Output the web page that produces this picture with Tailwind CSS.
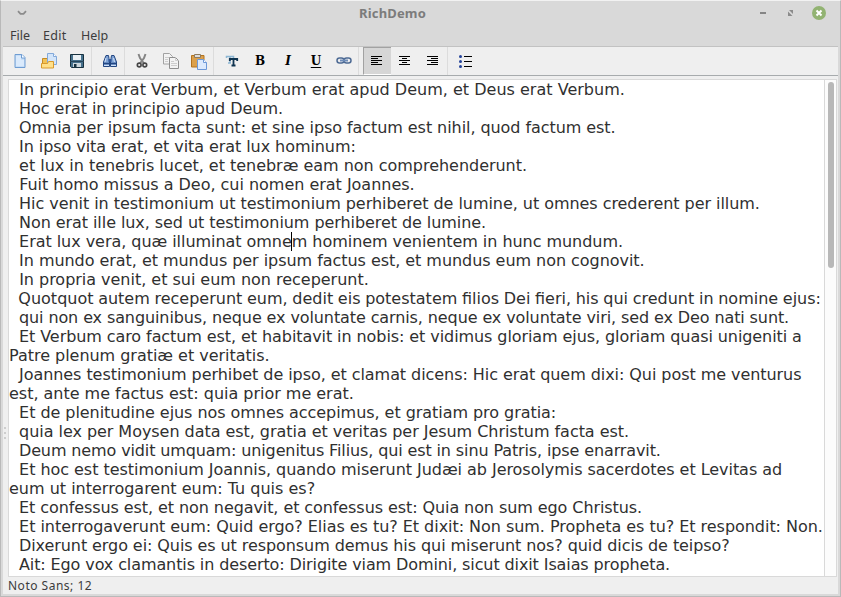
<!DOCTYPE html>
<html lang="la">
<head>
<meta charset="utf-8">
<title>RichDemo</title>
<script src="https://cdn.jsdelivr.net/npm/@tailwindcss/browser@4"></script>
</head>
<body class="w-[841px] h-[597px] overflow-hidden bg-[#d9d9d9]">
<div class="w-[841px] h-[597px] flex flex-col bg-[#d9d9d9] border-l-[1px] border-r-[1px] border-b-[1px] border-[#b9b9b9] border-t border-t-[#f2f2f2] px-[2px] pb-[2px] font-['Noto_Sans',sans-serif] text-[12px] text-[#3c3c3c]">
  <header class="h-[24px] shrink-0 grid grid-cols-[1fr_auto_1fr] items-center">
    <svg class="ml-[14px]" width="10" height="6" viewBox="0 0 10 6"><path d="M1 1.200 L3.500 3.800H6.500L9 1.200" fill="none" stroke="#8b8b8b" stroke-width="1.800"/></svg>
    <h1 class="font-bold text-[13px] tracking-[0.15px] leading-[24px] text-[#7c7c7c] mr-[56px]">RichDemo</h1>
    <div class="flex items-center justify-end pr-[12px]">
      <svg width="80" height="22" viewBox="0 0 80 22"><rect x="14" y="10" width="6" height="2" fill="#858585"/><path d="M43 8h4v4zM42 9.500v4.500h4.500z" fill="#8b8b8b"/><circle cx="73" cy="11" r="7" fill="#92b372"/><path d="M70.500 8.500l5 5m0-5l-5 5" stroke="#fff" stroke-width="2"/></svg>
    </div>
  </header>
  <nav class="h-[21px] shrink-0 flex items-center pl-[7px] leading-[21px] text-[12.5px]"><span class="w-[33px]">File</span><span class="w-[38px] tracking-[0.3px]">Edit</span><span>Help</span></nav>
  <div class="h-[30px] shrink-0 flex bg-[#efefef] border-t border-[#c2c2c2] border-b border-b-[#a7abad] [&>span]:w-7 [&>span]:flex [&>span]:items-center [&>span]:justify-center [&>i]:w-px [&>i]:bg-[#dcdcdc] pl-[3px]">
    <span><svg width="16" height="16" viewBox="0 0 16 16"><path d="M3 1.500h7l3 3v10H3z" fill="#c7def7" stroke="#6e9cd2"/><path d="M4 3h5v4h3v6H4z" fill="#e2effd" opacity=".7"/><path d="M9.500 1.500v3.500h3.500" fill="#fff" stroke="#6e9cd2"/></svg></span>
    <span class="pl-[2px]"><svg width="18" height="18" viewBox="0 0 18 18"><path d="M2.500 15V6.500h5l1 2h5V15" fill="#f2c255" stroke="#c58b25"/><path d="M7.500 1.500h6l3 3v8h-9z" fill="#d3e5fa" stroke="#82a9da"/><path d="M13.500 1.500v3h3" fill="#fff" stroke="#82a9da"/><path d="M1.500 11.500h6l1-2h5v6.500h-12z" fill="#ffe08a" stroke="#d99a2c"/></svg></span>
    <span class="pl-[2px]"><svg width="16" height="16" viewBox="0 0 16 16"><path d="M1.500 1.500h13v13h-12l-1-1z" fill="#47718d" stroke="#17313f"/><path d="M4 2h8v5H4z" fill="#e9f0f4"/><path d="M4 10h8v4H4z" fill="#cbd6dc"/><path d="M5 11h2.500v3H5z" fill="#17313f"/><path d="M1 8.500h14" stroke="#28465a"/></svg></span>
    <i class="mx-[1px]"></i>
    <span><svg class="ml-[5px]" width="16" height="16" viewBox="0 0 16 16"><path d="M4 2.500h2.500l.5 3 .5 3v5h-6V9zM9.500 2.500H12L14.500 9v4.500h-6v-5l.5-3z" fill="#7fa3d6" stroke="#234681"/><path d="M6.500 6h3v3h-3z" fill="#2f5597"/><path d="M4 5L3 9M11.500 5l1 4" stroke="#cfe0f7"/><path d="M2 12.500h5M9 12.500h5" stroke="#cfe0f7"/><path d="M1 10.500h6.500M8.500 10.500H15" stroke="#234681" stroke-width="1.500"/></svg></span>
    <i class="ml-[3px]"></i>
    <span class="ml-[3px]"><svg width="16" height="16" viewBox="0 0 16 16"><path d="M4.500 1L6 5l4 5.500M11.500 1L10 5l-4 5.500" stroke="#858585" stroke-width="2" fill="none"/><circle cx="5.200" cy="12" r="1.900" fill="none" stroke="#464646" stroke-width="1.600"/><circle cx="10.800" cy="12" r="1.900" fill="none" stroke="#464646" stroke-width="1.600"/></svg></span>
    <span class="ml-px"><svg width="16" height="16" viewBox="0 0 16 16"><path d="M.5.500h6l3 3v7.500h-9z" fill="#f3f3f3" stroke="#a2a2a2"/><path d="M6.500 4.500h6l3 3v8h-9z" fill="#f3f3f3" stroke="#8f8f8f"/><path d="M12.500 4.500v3h3M8 8.500h3M8 10.500h6M8 12.500h6M2 4.500h4M2 6.500h3M2 8.500h3" fill="none" stroke="#cdcdcd"/></svg></span>
    <span><svg class="-ml-px" width="17" height="17" viewBox="0 0 17 17"><path d="M1.500 2.500h12.500v11.500H1.500z" fill="#dba04c" stroke="#b3731f"/><path d="M4.500 1.500h6v3h-6z" fill="#ddd" stroke="#8f7a5c"/><path d="M7.500 6.500h6l3 3v7h-9z" fill="#dceafd" stroke="#6c98d8"/><path d="M13.500 6.500v3h3" fill="#fff" stroke="#6c98d8"/></svg></span>
    <i></i>
    <span class="ml-[4px]"><svg width="16" height="16" viewBox="0 0 16 16"><path d="M2.500 5V3.500h7V5M6 3.500v6M4 10h3" fill="none" stroke="#8db6d3" stroke-width="1.500"/><path d="M5.800 8V6h7.400v2M9.500 6v7M7.500 12.500h4" fill="none" stroke="#0f3450" stroke-width="1.800"/></svg></span>
    <span class="font-['DejaVu_Serif',serif] text-[12px] font-bold text-black">B</span>
    <span class="font-['DejaVu_Serif',serif] text-[12px] font-bold italic text-black">I</span>
    <span class="font-['DejaVu_Serif',serif] text-[12px] font-bold underline underline-offset-2 decoration-1 text-black"><span>U</span></span>
    <span><svg width="16" height="10" viewBox="0 0 16 10"><g fill="none" stroke="#4d6a94" stroke-width="1.500"><rect x="1" y="2" width="7" height="5" rx="2.500"/><rect x="8" y="2" width="7" height="5" rx="2.500"/></g><path d="M4 4.500h8" stroke="#6f8db8" stroke-width="2"/></svg></span>
    <i></i>
    <span class="ml-[4px] bg-[#d6d6d6] border-l border-t border-[#a2a2a2] border-b border-b-white"><svg class="-ml-[2px]" width="12" height="10" viewBox="0 0 12 10"><path d="M0 .5h11M0 2.500h7M0 4.500h11M0 6.500h7M0 8.500h11" stroke="#000"/></svg></span>
    <span><svg width="12" height="10" viewBox="0 0 12 10"><path d="M0 .5h11M3 2.500h5M0 4.500h11M3 6.500h5M0 8.500h11" stroke="#000"/></svg></span>
    <span><svg width="12" height="10" viewBox="0 0 12 10"><path d="M0 .5h11M4 2.500h7M0 4.500h11M4 6.500h7M0 8.500h11" stroke="#000"/></svg></span>
    <i></i>
    <span class="ml-[4px]"><svg width="14" height="13" viewBox="0 0 14 13"><path d="M5 1.500h8M5 6.500h8M5 11.500h8" stroke="#000"/><g fill="#24439a"><circle cx="1.500" cy="1.500" r="1.500"/><circle cx="1.500" cy="6.500" r="1.500"/><circle cx="1.500" cy="11.500" r="1.500"/></g></svg></span>
  </div>
  <div class="flex-1 min-h-0 flex bg-[#efefef] pt-[3px]">
    <div class="w-[5px] shrink-0 flex flex-col gap-[3px] pt-[348px] pl-[1px] [&>b]:size-[2px] [&>b]:bg-[#cdcdcd]"><b></b><b></b><b></b></div>
    <div class="flex-1 min-w-0 flex bg-white border border-[#d9d9d9]">
      <main class="relative w-[815px] shrink-0 overflow-hidden whitespace-pre font-['DejaVu_Sans',sans-serif] text-[16px] leading-[19px] text-[#303030] [&>p]:h-[19px]"><p class="tracking-[0.014px]">  In principio erat Verbum, et Verbum erat apud Deum, et Deus erat Verbum.</p><p class="tracking-[-0.045px]">  Hoc erat in principio apud Deum.</p><p class="tracking-[-0.067px]">  Omnia per ipsum facta sunt: et sine ipso factum est nihil, quod factum est.</p><p class="tracking-[-0.068px]">  In ipso vita erat, et vita erat lux hominum:</p><p class="tracking-[-0.025px]">  et lux in tenebris lucet, et tenebræ eam non comprehenderunt.</p><p class="tracking-[-0.021px]">  Fuit homo missus a Deo, cui nomen erat Joannes.</p><p class="tracking-[-0.05px]">  Hic venit in testimonium ut testimonium perhiberet de lumine, ut omnes crederent per illum.</p><p class="tracking-[-0.068px]">  Non erat ille lux, sed ut testimonium perhiberet de lumine.</p><p class="tracking-[-0.044px]">  Erat lux vera, quæ illuminat omnem hominem venientem in hunc mundum.</p><p class="tracking-[-0.047px]">  In mundo erat, et mundus per ipsum factus est, et mundus eum non cognovit.</p><p class="tracking-[-0.02px]">  In propria venit, et sui eum non receperunt.</p><p class="[word-spacing:-0.42px]">  Quotquot autem receperunt eum, dedit eis potestatem filios Dei fieri, his qui credunt in nomine ejus:</p><p class="tracking-[-0.103px]">  qui non ex sanguinibus, neque ex voluntate carnis, neque ex voluntate viri, sed ex Deo nati sunt.</p><p class="tracking-[-0.08px]">  Et Verbum caro factum est, et habitavit in nobis: et vidimus gloriam ejus, gloriam quasi unigeniti a</p><p class="tracking-[-0.025px]">Patre plenum gratiæ et veritatis.</p><p class="tracking-[-0.062px]">  Joannes testimonium perhibet de ipso, et clamat dicens: Hic erat quem dixi: Qui post me venturus</p><p class="tracking-[-0.02px]">est, ante me factus est: quia prior me erat.</p><p class="tracking-[-0.05px]">  Et de plenitudine ejus nos omnes accepimus, et gratiam pro gratia:</p><p class="tracking-[-0.044px]">  quia lex per Moysen data est, gratia et veritas per Jesum Christum facta est.</p><p class="tracking-[-0.12px]">  Deum nemo vidit umquam: unigenitus Filius, qui est in sinu Patris, ipse enarravit.</p><p class="tracking-[-0.043px]">  Et hoc est testimonium Joannis, quando miserunt Judæi ab Jerosolymis sacerdotes et Levitas ad</p><p>eum ut interrogarent eum: Tu quis es?</p><p class="tracking-[-0.083px]">  Et confessus est, et non negavit, et confessus est: Quia non sum ego Christus.</p><p class="tracking-[-0.04px]">  Et interrogaverunt eum: Quid ergo? Elias es tu? Et dixit: Non sum. Propheta es tu? Et respondit: Non.</p><p class="tracking-[-0.08px]">  Dixerunt ergo ei: Quis es ut responsum demus his qui miserunt nos? quid dicis de teipso?</p><p class="tracking-[-0.106px]">  Ait: Ego vox clamantis in deserto: Dirigite viam Domini, sicut dixit Isaias propheta.</p><div class="absolute left-[282px] top-[152px] w-px h-[19px] bg-black"></div></main>
      <aside class="flex-1 bg-[#fcfcfc] border-l border-[#d9d9d9] pt-[2px] flex justify-center"><div class="w-[6px] h-[186px] rounded-full bg-[#b8b8b8]"></div></aside>
    </div>
    <div class="w-px"></div>
  </div>
  <footer class="h-[17px] shrink-0 bg-[#efefef] pl-[5px] leading-[17px] tracking-[0.5px]">Noto Sans; 12</footer>
</div>
</body>
</html>
